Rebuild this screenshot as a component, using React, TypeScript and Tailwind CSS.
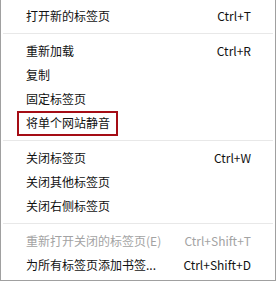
const font = { fontFamily: '"Noto Sans CJK SC", "Noto Sans", sans-serif' };

type Item = {
  label: string;
  shortcut?: string;
  disabled?: boolean;
  highlight?: boolean;
};

const groups: Item[][] = [
  [{ label: "打开新的标签页", shortcut: "Ctrl+T" }],
  [
    { label: "重新加载", shortcut: "Ctrl+R" },
    { label: "复制" },
    { label: "固定标签页" },
    { label: "将单个网站静音", highlight: true },
  ],
  [
    { label: "关闭标签页", shortcut: "Ctrl+W" },
    { label: "关闭其他标签页" },
    { label: "关闭右侧标签页" },
  ],
  [
    { label: "重新打开关闭的标签页(E)", shortcut: "Ctrl+Shift+T", disabled: true },
    { label: "为所有标签页添加书签...", shortcut: "Ctrl+Shift+D" },
  ],
];

function MenuRow({ label, shortcut, disabled, highlight }: Item) {
  return (
    <div
      className={`relative flex h-6 items-center justify-between pl-[25px] pr-[24px] text-[12px] ${
        disabled ? "text-[#a3a3a3]" : "text-[#111]"
      }`}
    >
      <span>{label}</span>
      {shortcut && <span>{shortcut}</span>}
      {highlight && (
        <div className="absolute left-[16px] top-0 h-[25px] w-[101px] border-2 border-[#a50d15]" />
      )}
    </div>
  );
}

export default function App() {
  return (
    <div className="h-[281px] w-[276px] bg-white" style={font}>
      <div className="flex h-full flex-col border-x border-b border-[#a0a0a0] pt-1">
        {groups.map((group, i) => (
          <div key={i}>
            {i > 0 && <div className="mx-[2px] my-[5px] h-px bg-[#e8e8e8]" />}
            {group.map((item) => (
              <MenuRow key={item.label} {...item} />
            ))}
          </div>
        ))}
      </div>
    </div>
  );
}
